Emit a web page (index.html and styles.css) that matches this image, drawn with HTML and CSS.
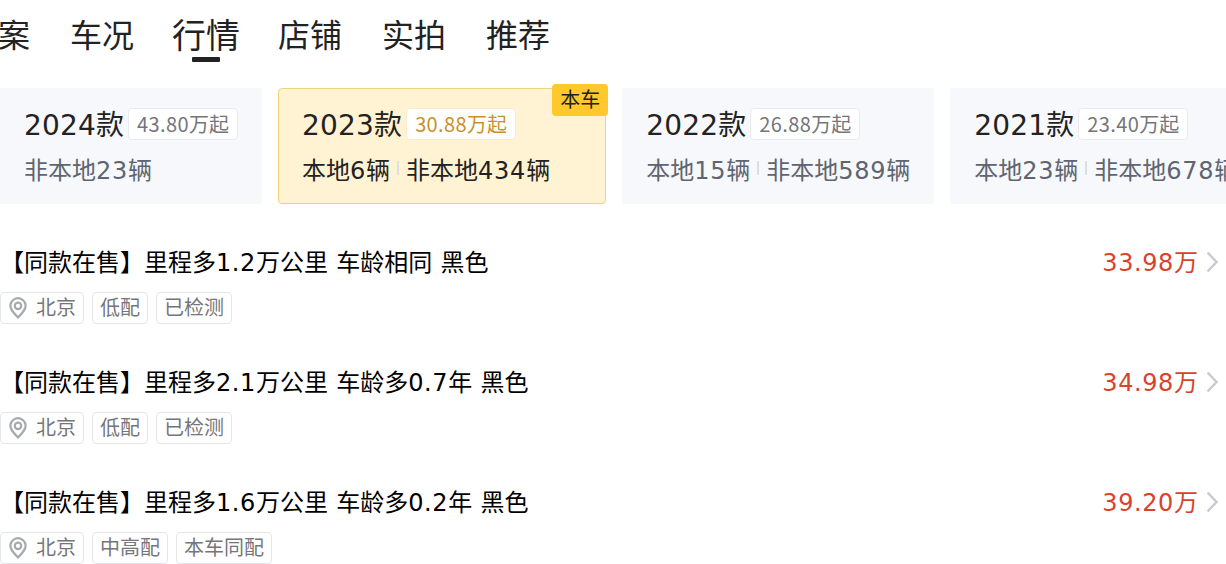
FILE: index.html
```html
<!DOCTYPE html>
<html lang="zh-CN">
<head>
  <meta charset="UTF-8" />
  <title>行情</title>
  <link rel="stylesheet" href="styles.css">
</head>
<body>
  <nav class="tabs">
    <a class="tab">档案</a>
    <a class="tab">车况</a>
    <a class="tab active"><span>行情</span></a>
    <a class="tab">店铺</a>
    <a class="tab">实拍</a>
    <a class="tab">推荐</a>
  </nav>

  <div class="years">
    <div class="year">
      <div class="year-head"><span class="year-name"><b>2024</b>款</span><span class="from"><b>43.80</b>万起</span></div>
      <div class="year-count"><span>非本地<b>23</b>辆</span></div>
    </div>
    <div class="year current">
      <span class="badge">本车</span>
      <div class="year-head"><span class="year-name"><b>2023</b>款</span><span class="from"><b>30.88</b>万起</span></div>
      <div class="year-count"><span>本地<b>6</b>辆</span><i class="sep"></i><span>非本地<b>434</b>辆</span></div>
    </div>
    <div class="year">
      <div class="year-head"><span class="year-name"><b>2022</b>款</span><span class="from"><b>26.88</b>万起</span></div>
      <div class="year-count"><span>本地<b>15</b>辆</span><i class="sep"></i><span>非本地<b>589</b>辆</span></div>
    </div>
    <div class="year">
      <div class="year-head"><span class="year-name"><b>2021</b>款</span><span class="from"><b>23.40</b>万起</span></div>
      <div class="year-count"><span>本地<b>23</b>辆</span><i class="sep"></i><span>非本地<b>678</b>辆</span></div>
    </div>
  </div>

  <div class="list">
    <div class="item">
      <div class="item-top">
        <div class="item-title">【同款在售】里程多<b>1.2</b>万公里<b> </b>车龄相同<b> </b>黑色</div>
        <div class="price"><b>33.98</b>万</div>
        <svg class="arrow" viewBox="0 0 12 22"><path d="M1.5 1.5 10.5 11 1.5 20.5"/></svg>
      </div>
      <div class="tags">
        <span class="tag"><svg class="pin" viewBox="0 0 20 24"><path d="M10 22.5C5 17.5 1.5 14 1.5 9.6a8.5 8.5 0 0 1 17 0c0 4.4-3.5 7.9-8.5 12.9Z"/><circle cx="10" cy="9.6" r="3.6"/></svg>北京</span>
        <span class="tag">低配</span>
        <span class="tag">已检测</span>
      </div>
    </div>
    <div class="item">
      <div class="item-top">
        <div class="item-title">【同款在售】里程多<b>2.1</b>万公里<b> </b>车龄多<b>0.7</b>年<b> </b>黑色</div>
        <div class="price"><b>34.98</b>万</div>
        <svg class="arrow" viewBox="0 0 12 22"><path d="M1.5 1.5 10.5 11 1.5 20.5"/></svg>
      </div>
      <div class="tags">
        <span class="tag"><svg class="pin" viewBox="0 0 20 24"><path d="M10 22.5C5 17.5 1.5 14 1.5 9.6a8.5 8.5 0 0 1 17 0c0 4.4-3.5 7.9-8.5 12.9Z"/><circle cx="10" cy="9.6" r="3.6"/></svg>北京</span>
        <span class="tag">低配</span>
        <span class="tag">已检测</span>
      </div>
    </div>
    <div class="item">
      <div class="item-top">
        <div class="item-title">【同款在售】里程多<b>1.6</b>万公里<b> </b>车龄多<b>0.2</b>年<b> </b>黑色</div>
        <div class="price"><b>39.20</b>万</div>
        <svg class="arrow" viewBox="0 0 12 22"><path d="M1.5 1.5 10.5 11 1.5 20.5"/></svg>
      </div>
      <div class="tags">
        <span class="tag"><svg class="pin" viewBox="0 0 20 24"><path d="M10 22.5C5 17.5 1.5 14 1.5 9.6a8.5 8.5 0 0 1 17 0c0 4.4-3.5 7.9-8.5 12.9Z"/><circle cx="10" cy="9.6" r="3.6"/></svg>北京</span>
        <span class="tag">中高配</span>
        <span class="tag">本车同配</span>
      </div>
    </div>
  </div>
</body>
</html>
```

FILE: styles.css
```css
html, body {
  height: 100%;
  margin: 0;
  overflow: hidden;
  background: #fff;
  font-family: 'DejaVu Sans', 'Noto Sans CJK SC', sans-serif;
  color: #000;
}

/* digits and spaces run a little wider than the natural advance */
b {
  font-weight: normal;
  letter-spacing: .6px;
}

.tabs {
  display: flex;
  gap: 40px;
  height: 88px;
  margin-left: -34px;
}

.tab {
  position: relative;
  height: 72px;
  line-height: 72px;
  font-size: 32px;
  color: #222;
}

.tab.active span {
  display: inline-block;
  transform: scale(1.06);
}

.tab.active::after {
  content: '';
  position: absolute;
  left: 18px;
  bottom: 10px;
  width: 28px;
  height: 5px;
  border-radius: 1px;
  background: #222;
}

.years {
  display: flex;
  gap: 16px;
  height: 116px;
}

.year {
  position: relative;
  flex: none;
  padding: 20px 24px 0;
  background: #f6f8fb;
  border-radius: 2px;
}

.year.current {
  padding: 19px 55px 0 23px;
  background: #fff3d3;
  border: 1px solid #f2d277;
  border-radius: 4px;
}

.badge {
  position: absolute;
  top: -5px;
  right: -3px;
  width: 56px;
  height: 32px;
  line-height: 32px;
  text-align: center;
  font-size: 20px;
  color: #222;
  background: #ffc92e;
  border-radius: 4px;
}

.year-head {
  display: flex;
  align-items: center;
  height: 32px;
}

.year-name {
  font-size: 28px;
  color: #222;
  margin-top: -2px;
}

.year-name b {
  letter-spacing: .2px;
}

.from {
  margin-left: 4px;
  height: 30px;
  line-height: 30px;
  padding: 0 8px;
  font-family: 'Noto Sans CJK SC', sans-serif;
  font-size: 20px;
  color: #74767a;
  background: #fff;
  border: 1px solid #e8eaee;
  border-radius: 4px;
}

.from b {
  letter-spacing: .4px;
}

.current .from {
  color: #c8912a;
  border-color: #f8ecca;
}

.year-count {
  display: flex;
  align-items: center;
  margin-top: 10px;
  height: 36px;
  font-size: 24px;
  color: #5f6570;
  white-space: nowrap;
}

.year-count b {
  letter-spacing: .75px;
}

.current .year-count {
  color: #222;
}

.sep {
  width: 2px;
  height: 14px;
  margin: 0 7px;
  background: #dcdfe4;
}

.list {
  display: flex;
  flex-direction: column;
  gap: 36px;
  padding-top: 36px;
}

.item-top {
  display: flex;
  align-items: center;
  height: 40px;
  padding-right: 8px;
}

.item-title {
  flex: 1;
  font-size: 24px;
}

.price {
  font-size: 24px;
  color: #d8432b;
}

.arrow {
  width: 12px;
  height: 22px;
  margin: 4px 0 0 8px;
  fill: none;
  stroke: #c8cbd0;
  stroke-width: 2.4;
}

.tags {
  display: flex;
  gap: 8px;
  margin-top: 12px;
}

.tag {
  display: flex;
  align-items: center;
  height: 32px;
  padding: 0 7px 4px;
  font-size: 20px;
  color: #74767a;
  border: 1px solid #e4e6ea;
  border-radius: 4px;
  box-sizing: border-box;
}

.pin {
  width: 18px;
  height: 22px;
  margin: 4px 9px 0 1px;
  fill: none;
  stroke: #a6a9ae;
  stroke-width: 2.4;
}
```
